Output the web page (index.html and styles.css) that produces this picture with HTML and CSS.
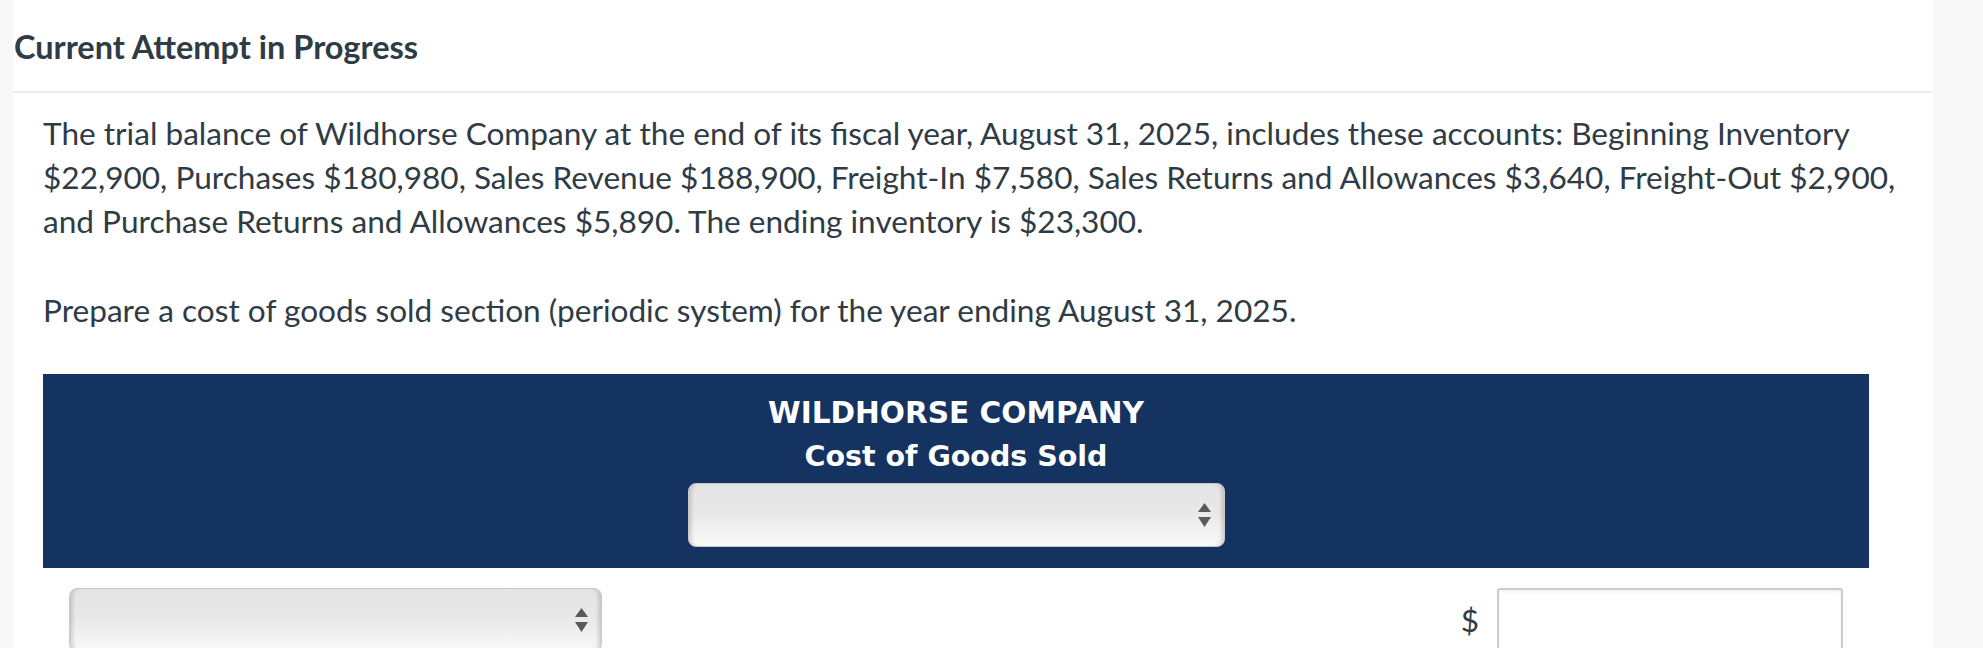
FILE: index.html
```html
<!DOCTYPE html>
<html lang="en">
<head>
    <meta charset="UTF-8">
    <meta name="viewport" content="width=device-width, initial-scale=1.0">
    <title>Current Attempt in Progress</title>
    <link rel="stylesheet" href="styles.css">
</head>
<body>

    <div class="panel">
        <div class="attempt-header">
            <h1>Current Attempt in Progress</h1>
        </div>

        <div class="question">
            <p>The trial balance of Wildhorse Company at the end of its fiscal year, August 31, 2025, includes these accounts: Beginning Inventory $22,900, Purchases $180,980, Sales Revenue $188,900, Freight-In $7,580, Sales Returns and Allowances $3,640, Freight-Out $2,900, and Purchase Returns and Allowances $5,890. The ending inventory is $23,300.</p>
            <p>Prepare a cost of goods sold section (periodic system) for the year ending August 31, 2025.</p>

            <div class="statement">
                <div class="statement-head">
                    <div class="company">WILDHORSE COMPANY</div>
                    <div class="title">Cost of Goods Sold</div>
                    <div class="dropdown dropdown-period">
                        <select></select>
                        <svg class="arrows" width="13" height="24" viewBox="0 0 13 24"><path d="M6.5 0 L13 9 L0 9 Z M0 14 L13 14 L6.5 24 Z" fill="#595959"/></svg>
                    </div>
                </div>

                <div class="statement-row">
                    <div class="dropdown dropdown-account">
                        <select></select>
                        <svg class="arrows" width="13" height="24" viewBox="0 0 13 24"><path d="M6.5 0 L13 9 L0 9 Z M0 14 L13 14 L6.5 24 Z" fill="#595959"/></svg>
                    </div>
                    <div class="amount">
                        <span class="currency">$</span>
                        <input type="text">
                    </div>
                </div>
            </div>
        </div>
    </div>

</body>
</html>
```

FILE: styles.css
```css
body {
    margin: 0;
    background: #f8f8f8;
    font-family: Lato, "Open Sans", sans-serif;
    color: #2f3b45;
}
.panel {
    margin-left: 13px;
    width: 1920px;
    min-height: 648px;
    background: #fff;
}
.attempt-header {
    padding: 28px 0 26px 1px;
    border-bottom: 2px solid #ececec;
}
.attempt-header h1 {
    margin: 0;
    font-size: 32.5px;
    line-height: 37px;
    font-weight: 700;
}
.question {
    padding: 18px 20px 0 30px;
}
.question p {
    margin: 0 0 45px 0;
    font-size: 31.6px;
    line-height: 44px;
}
.question p:last-of-type {
    margin-bottom: 42px;
}
.statement {
    width: 1826px;
}
.statement-head {
    background: #143360;
    padding: 18px 0 21px;
    display: flex;
    flex-direction: column;
    align-items: center;
    color: #fff;
    font-family: "DejaVu Sans", Verdana, sans-serif;
    font-weight: 700;
    font-size: 28.5px;
    line-height: 43px;
}
.statement-head .company {
    font-size: 29.6px;
}
.statement-head .dropdown {
    margin-top: 5px;
}
.dropdown {
    position: relative;
    height: 64px;
}
.dropdown select {
    appearance: none;
    -webkit-appearance: none;
    width: 100%;
    height: 100%;
    margin: 0;
    border: 1px solid #c9c9c9;
    border-radius: 8px;
    background: linear-gradient(#e5e5e5, #e8e8e8 45%, #f9f9f9);
    box-shadow: inset 5px 0 4px -3px rgba(0,0,0,0.18), inset -5px 0 4px -3px rgba(0,0,0,0.18);
}
.dropdown .arrows {
    position: absolute;
    right: 14px;
    top: 20px;
}
.dropdown-period {
    width: 537px;
}
.dropdown-account {
    width: 533px;
}
.statement-row {
    display: flex;
    justify-content: space-between;
    align-items: center;
    padding: 20px 26px 0 26px;
}
.amount {
    display: flex;
    align-items: center;
    gap: 18px;
}
.currency {
    font-size: 31.6px;
}
.amount input {
    width: 346px;
    height: 64px;
    box-sizing: border-box;
    margin: 0;
    border: 2px solid #cccccc;
    border-radius: 3px;
    box-shadow: inset 0 2px 3px rgba(0,0,0,0.06);
}
```
